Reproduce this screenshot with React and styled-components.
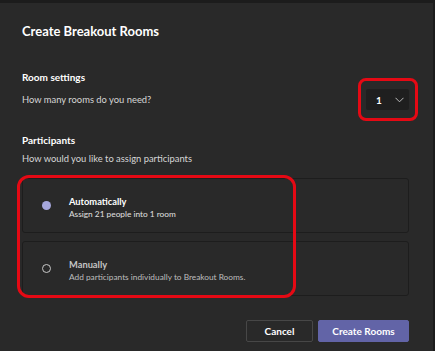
import React, { useState } from 'react';
import styled, { createGlobalStyle } from 'styled-components';

const GlobalStyle = createGlobalStyle`
  html, body {
    margin: 0;
    padding: 0;
    background: #1c1c1c;
    font-family: Lato, 'Open Sans', sans-serif;
  }
  * { box-sizing: border-box; }
`;

const Dialog = styled.div`
  position: relative;
  margin-top: 3px;
  width: 433px;
  height: 348px;
  background: #292929;
  padding: 18px 24px 0 22px;
  display: flex;
  flex-direction: column;
`;

const Title = styled.h1`
  margin: 0;
  color: #ffffff;
  font-size: 13px;
  font-weight: 700;
  line-height: 20px;
`;

const SettingsRow = styled.div`
  display: flex;
  justify-content: space-between;
  align-items: flex-end;
  margin-top: 28px;
`;

const Column = styled.div`
  display: flex;
  flex-direction: column;
`;

const Label = styled.div`
  color: #ffffff;
  font-size: 10px;
  font-weight: 700;
  line-height: 16px;
  margin-top: ${({ $top }) => $top || 0}px;
`;

const Description = styled.div`
  color: #d6d6d6;
  font-size: 9.4px;
  line-height: 18px;
  margin-top: ${({ $top }) => $top || 0}px;
`;

const Select = styled.div`
  width: 43px;
  height: 21px;
  margin-bottom: -1px;
  background: #1f1f1f;
  border-radius: 2px;
  display: flex;
  align-items: center;
  justify-content: space-between;
  padding: 0 5px 0 10px;
  color: #ffffff;
  font-size: 10px;
  font-weight: 700;
`;

const OptionList = styled.div`
  display: flex;
  flex-direction: column;
  gap: 8px;
  margin-top: 10px;
`;

const OptionCard = styled.div`
  height: 55px;
  border: 1px solid #1d1d1d;
  border-radius: 3px;
  background: #292929;
  display: flex;
  align-items: center;
  padding-left: 19px;
  gap: 18px;
  cursor: pointer;
`;

const Radio = styled.span`
  width: 9px;
  height: 9px;
  border-radius: 50%;
  flex-shrink: 0;
  background: ${({ $checked }) => ($checked ? '#a6a7dc' : 'transparent')};
  border: ${({ $checked }) => ($checked ? 'none' : '1px solid #c8c8c8')};
`;

const OptionText = styled.div`
  display: flex;
  flex-direction: column;
  padding-top: 4px;
`;

const OptionTitle = styled.div`
  color: ${({ $dim }) => ($dim ? '#c4c4c4' : '#ffffff')};
  font-size: 9.3px;
  font-weight: 700;
  line-height: 13px;
`;

const OptionSub = styled.div`
  color: ${({ $dim }) => ($dim ? '#bdbdbd' : '#e0e0e0')};
  font-size: 8.3px;
  line-height: 13px;
`;

const Footer = styled.div`
  display: flex;
  justify-content: flex-end;
  gap: 5px;
  margin-top: 24px;
`;

const Button = styled.button`
  height: 22px;
  padding: 0;
  width: ${({ $w }) => $w}px;
  border-radius: 2px;
  font-family: inherit;
  font-size: 10px;
  font-weight: 700;
  color: #ffffff;
  cursor: pointer;
  background: ${({ $primary }) => ($primary ? '#6264a7' : '#292929')};
  border: 1px solid ${({ $primary }) => ($primary ? '#6264a7' : '#474747')};
`;

const Highlight = styled.div`
  position: absolute;
  left: ${({ $x }) => $x}px;
  top: ${({ $y }) => $y}px;
  width: ${({ $w }) => $w}px;
  height: ${({ $h }) => $h}px;
  border: 3px solid #e50914;
  border-radius: ${({ $r }) => $r}px;
  pointer-events: none;
`;

const Chevron = () => (
  <svg width="9" height="6" viewBox="0 0 9 6" fill="none">
    <path d="M0.5 0.8 L4.5 4.8 L8.5 0.8" stroke="#bdbdbd" strokeWidth="1" />
  </svg>
);

export default function App() {
  const [mode, setMode] = useState('auto');

  return (
    <>
      <GlobalStyle />
      <Dialog>
        <Title>Create Breakout Rooms</Title>

        <SettingsRow>
          <Column>
            <Label>Room settings</Label>
            <Description $top={6}>How many rooms do you need?</Description>
          </Column>
          <Select>
            1
            <Chevron />
          </Select>
        </SettingsRow>

        <Label $top={23}>Participants</Label>
        <Description $top={2}>How would you like to assign participants</Description>

        <OptionList>
          <OptionCard onClick={() => setMode('auto')}>
            <Radio $checked={mode === 'auto'} />
            <OptionText>
              <OptionTitle>Automatically</OptionTitle>
              <OptionSub>Assign 21 people into 1 room</OptionSub>
            </OptionText>
          </OptionCard>
          <OptionCard onClick={() => setMode('manual')}>
            <Radio $checked={mode === 'manual'} />
            <OptionText>
              <OptionTitle $dim>Manually</OptionTitle>
              <OptionSub $dim>Add participants individually to Breakout Rooms.</OptionSub>
            </OptionText>
          </OptionCard>
        </OptionList>

        <Footer>
          <Button $w={67}>Cancel</Button>
          <Button $w={91} $primary>Create Rooms</Button>
        </Footer>

        <Highlight $x={358} $y={75} $w={60} $h={43} $r={8} />
        <Highlight $x={17} $y={172} $w={279} $h={123} $r={12} />
      </Dialog>
    </>
  );
}
